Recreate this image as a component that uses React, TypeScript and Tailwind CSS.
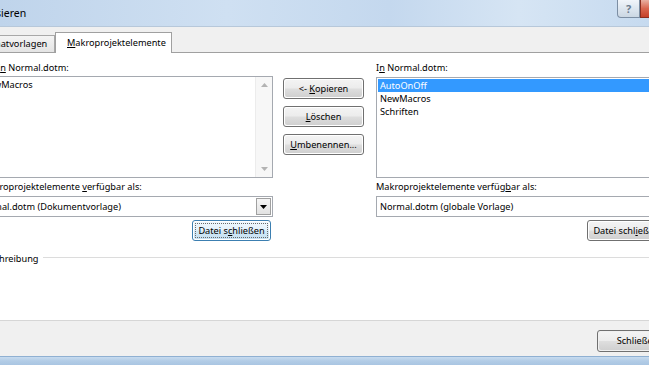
import React from "react";

const btnBg =
  "bg-[linear-gradient(to_bottom,#f3f3f3_0%,#ececec_48%,#dedede_52%,#d0d0d0_100%)]";

function Btn({
  children,
  className = "",
  focused = false,
}: {
  children: React.ReactNode;
  className?: string;
  focused?: boolean;
}) {
  return (
    <div
      className={
        "shrink-0 rounded-[3px] border p-px " +
        (focused ? "border-[#3c7fb1] " : "border-[#707070] ") +
        className
      }
    >
      <div
        className={
          "flex h-full w-full items-center justify-center rounded-[2px] " +
          (focused
            ? "bg-[linear-gradient(to_bottom,#eef7fd_0%,#e3f1fb_48%,#d2e8f6_52%,#c4e0f2_100%)]"
            : btnBg)
        }
      >
        <span className="whitespace-pre">{children}</span>
      </div>
    </div>
  );
}

function U({ children }: { children: React.ReactNode }) {
  return <span className="underline underline-offset-[1px]">{children}</span>;
}

export default function App() {
  return (
    <div className="flex h-[365px] w-[649px] flex-col overflow-hidden bg-[#f0f0f0] font-['Noto_Sans',sans-serif] text-[9.2px] text-black">
      {/* Title bar */}
      <div className="flex h-[27px] shrink-0 items-start border-b border-[#b7c8da] bg-[linear-gradient(to_right,#bfd4eb_0%,#cfe0f2_35%,#c4d8ee_60%,#d6e5f4_80%,#c6daef_100%)]">
        <span className="ml-[-38px] mt-[6px] text-[10.5px] leading-[14px]">
          Organisieren
        </span>
        <div className="flex-1" />
        <div className="flex h-[18px] w-[23px] shrink-0 items-center justify-center rounded-bl-[4px] border border-t-0 border-[#7c8ea3] bg-[linear-gradient(to_bottom,#f1f5fa_0%,#dde6ef_50%,#cbd7e3_100%)]">
          <span className="text-[11px] font-bold leading-none text-[#6c7c8e]">
            ?
          </span>
        </div>
        <div className="mr-[-34px] h-[18px] w-[43px] shrink-0 rounded-br-[4px] border border-t-0 border-[#8a2f20] bg-[linear-gradient(to_bottom,#e9b0a2_0%,#d9664f_50%,#c5412a_100%)]" />
      </div>

      {/* Tab strip */}
      <div className="flex h-[26px] shrink-0 items-end border-b border-[#a0a0a0]">
        <div className="ml-[-31px] flex h-[17px] w-[86px] shrink-0 items-center border border-b-0 border-[#a8a8a8] bg-[linear-gradient(to_bottom,#f4f4f4,#e4e4e4)] pl-[8px]">
          Formatvorlagen
        </div>
        <div className="relative z-10 mb-[-1px] flex h-[21px] w-[117px] shrink-0 items-center border border-b-0 border-[#a0a0a0] bg-white pl-[11px]">
          <span>
            <U>M</U>akroprojektelemente
          </span>
        </div>
      </div>

      {/* Panel */}
      <div className="h-[268px] shrink-0 border-b border-[#d6d6d6] bg-white">
        <div className="ml-[-19px] flex pt-[8px]">
          {/* Left column */}
          <div className="flex w-[292px] shrink-0 flex-col">
            <div className="h-[15px] pl-[16px] leading-[14px]">
              I<U>n</U> Normal.dotm:
            </div>
            <div className="flex h-[102px] border border-[#a5a9b0] bg-white">
              <div className="flex-1 pt-px">
                <div className="h-[13px] leading-[13px]">NewMacros</div>
              </div>
              <div className="flex w-[17px] flex-col items-center justify-between border-l border-[#ececec] bg-[#f7f7f7] py-[6px]">
                <svg width="7" height="4" viewBox="0 0 7 4">
                  <path d="M0 4 L3.5 0 L7 4 Z" fill="#b3b3b3" />
                </svg>
                <svg width="7" height="4" viewBox="0 0 7 4">
                  <path d="M0 0 L3.5 4 L7 0 Z" fill="#b3b3b3" />
                </svg>
              </div>
            </div>
            <div className="mt-[2px] h-[14px] leading-[14px]">
              Makroprojektelemente <U>v</U>erfügbar als:
            </div>
            <div className="mt-[2px] flex h-[21px] items-center border border-[#a5a9b0] bg-white">
              <span className="ml-[-5px] flex-1">
                Normal.dotm (Dokumentvorlage)
              </span>
              <div className="mr-px flex h-[17px] w-[15px] items-center justify-center border border-[#a0a0a0] bg-[linear-gradient(to_bottom,#f6f6f6,#e2e2e2)]">
                <svg width="7" height="4" viewBox="0 0 7 4">
                  <path d="M0 0 L3.5 4 L7 0 Z" fill="#000" />
                </svg>
              </div>
            </div>
            <div className="mt-[3px] flex justify-end pr-[2px]">
              <Btn focused className="h-[21px] w-[79px]">
                <span className="px-[2px] outline-1 outline-dotted outline-[#6a6a6a]">
                  Datei s<U>c</U>hließen
                </span>
              </Btn>
            </div>
          </div>

          {/* Middle buttons */}
          <div className="ml-[10px] flex w-[81px] shrink-0 flex-col gap-[7px] pt-[17px]">
            <Btn className="h-[21px] w-[81px]">
              {"<- "}
              <U>K</U>opieren
            </Btn>
            <Btn className="h-[21px] w-[81px]">
              <U>L</U>öschen
            </Btn>
            <Btn className="h-[21px] w-[81px]">
              <U>U</U>mbenennen...
            </Btn>
          </div>

          {/* Right column */}
          <div className="ml-[12px] flex w-[292px] shrink-0 flex-col">
            <div className="h-[16px] leading-[14px]">
              I<U>n</U> Normal.dotm:
            </div>
            <div className="flex h-[101px] border border-[#a5a9b0] bg-white">
              <div className="flex-1 pt-px pl-px">
                {["AutoOnOff", "NewMacros", "Schriften"].map((it, i) => (
                  <div
                    key={it}
                    className={
                      "h-[13px] pl-[2px] leading-[13px] " +
                      (i === 0 ? "bg-[#3399ff] text-white" : "")
                    }
                  >
                    {it}
                  </div>
                ))}
              </div>
            </div>
            <div className="mt-[2px] h-[14px] leading-[14px]">
              Makroprojektelemente verfüg<U>b</U>ar als:
            </div>
            <div className="mt-[2px] flex h-[21px] items-center border border-[#a5a9b0] bg-white">
              <span className="flex-1 pl-[3px]">
                Normal.dotm (globale Vorlage)
              </span>
            </div>
            <div className="mt-[3px] flex justify-end pr-[2px]">
              <Btn className="h-[21px] w-[79px]">
                Datei schl<U>i</U>eßen
              </Btn>
            </div>
          </div>
        </div>

        {/* Beschreibung group */}
        <div className="ml-[-21px] mt-[11px] flex items-start">
          <span className="h-[14px] leading-[14px]">Beschreibung</span>
          <div className="ml-[5px] mt-[5px] h-px flex-1 bg-[#dcdcdc]" />
        </div>
      </div>

      {/* Footer */}
      <div className="flex h-[35px] shrink-0 items-start justify-end bg-[#f0f0f0] pt-[9px]">
        <Btn className="mr-[-29px] h-[22px] w-[81px]">Schließen</Btn>
      </div>

      {/* Bottom frame */}
      <div className="h-[9px] shrink-0 border-t border-[#8fb0d2] bg-[linear-gradient(to_bottom,#c7dbef_0%,#b2cce6_50%,#a9c5e2_100%)]" />
    </div>
  );
}
